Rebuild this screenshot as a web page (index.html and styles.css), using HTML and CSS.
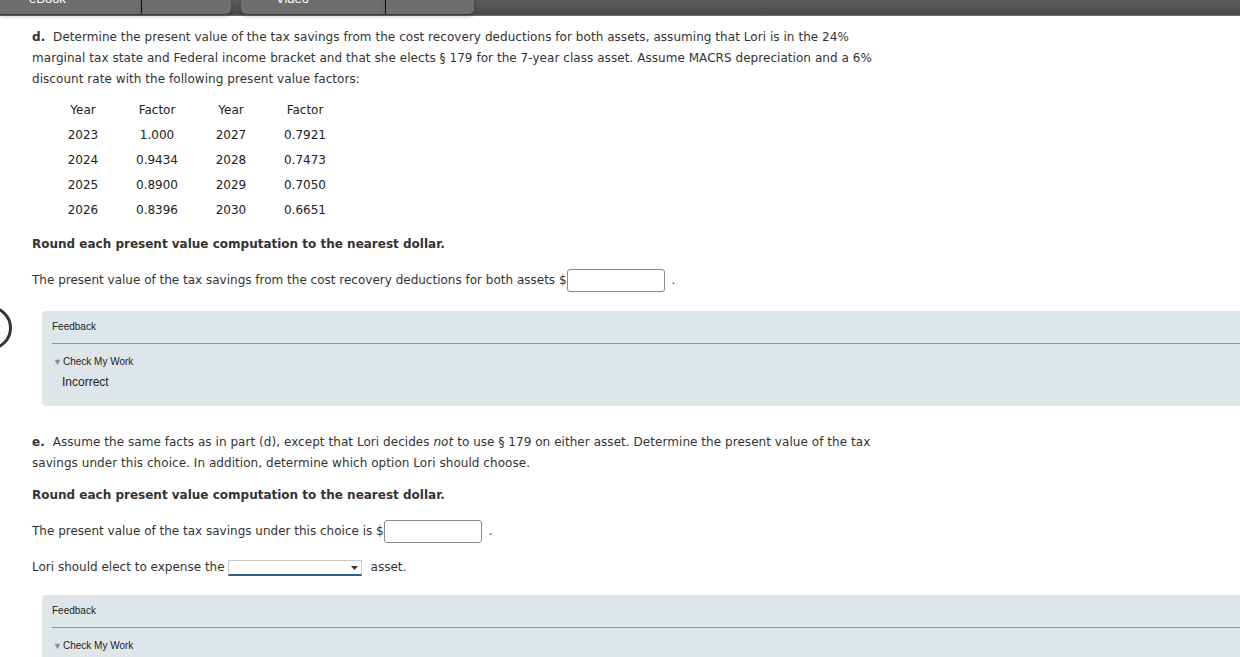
FILE: index.html
```html
<!DOCTYPE html>
<html>
<head>
<meta charset="utf-8">
<link rel="stylesheet" href="styles.css">
</head>
<body>
<div class="topbar">
  <div class="tabgroup tg1">
    <div class="tab t1"><span>eBook</span></div>
    <div class="tab t2"></div>
  </div>
  <div class="tabgroup tg2">
    <div class="tab t3"><span>Video</span></div>
    <div class="tab t4"></div>
  </div>
</div>

<div class="circle"></div>

<div class="content">
  <p class="para"><b>d.</b> Determine the present value of the tax savings from the cost recovery deductions for both assets, assuming that Lori is in the 24% marginal tax state and Federal income bracket and that she elects § 179 for the 7-year class asset. Assume MACRS depreciation and a 6% discount rate with the following present value factors:</p>

  <table class="pv">
    <tr><th>Year</th><th>Factor</th><th>Year</th><th>Factor</th></tr>
    <tr><td>2023</td><td>1.000</td><td>2027</td><td>0.7921</td></tr>
    <tr><td>2024</td><td>0.9434</td><td>2028</td><td>0.7473</td></tr>
    <tr><td>2025</td><td>0.8900</td><td>2029</td><td>0.7050</td></tr>
    <tr><td>2026</td><td>0.8396</td><td>2030</td><td>0.6651</td></tr>
  </table>

  <p class="bold r1">Round each present value computation to the nearest dollar.</p>

  <p class="line a1">The present value of the tax savings from the cost recovery deductions for both assets $<span class="input"></span><span class="dot">.</span></p>

  <div class="feedback fb1">
    <div class="fbtitle">Feedback</div>
    <div class="fbrule"></div>
    <div class="check"><span class="tri">▼</span>Check My Work</div>
    <div class="result">Incorrect</div>
  </div>

  <p class="para e1"><b>e.</b> Assume the same facts as in part (d), except that Lori decides <i>not</i> to use § 179 on either asset. Determine the present value of the tax savings under this choice. In addition, determine which option Lori should choose.</p>

  <p class="bold r2">Round each present value computation to the nearest dollar.</p>

  <p class="line a2">The present value of the tax savings under this choice is $<span class="input"></span><span class="dot">.</span></p>

  <p class="line a3">Lori should elect to expense the <span class="select"><svg class="caret" width="7" height="4" viewBox="0 0 7 4"><path d="M0 0H7L3.5 4Z" fill="#333"/></svg></span><span class="after">asset.</span></p>

  <div class="feedback fb2">
    <div class="fbtitle">Feedback</div>
    <div class="fbrule"></div>
    <div class="check"><span class="tri">▼</span>Check My Work</div>
  </div>
</div>
</body>
</html>
```

FILE: styles.css
```css
html, body {
  margin: 0;
  padding: 0;
  background: #fff;
  overflow: hidden;
}
body {
  width: 1240px;
  height: 657px;
  position: relative;
  font-family: "DejaVu Sans", sans-serif;
  color: #333;
}
.topbar {
  height: 15px;
  background: linear-gradient(#5c5c5c, #4a4a4a);
  border-bottom: 1px solid #6a6a6a;
  display: flex;
  gap: 10px;
}
.tabgroup {
  display: flex;
  height: 14px;
}
.tg1 { width: 231px; }
.tg2 { width: 233px; }
.tab {
  background: #6e6e6e;
  height: 14px;
  position: relative;
  overflow: hidden;
  box-shadow: 0 2px 4px rgba(0,0,0,0.25);
}
.t1 { width: 141px; border-right: 1px solid #111; }
.t2 { width: 89px; border-radius: 0 0 5px 0; }
.t3 { width: 144px; border-right: 1px solid #111; border-radius: 0 0 0 5px; }
.t4 { width: 88px; border-radius: 0 0 5px 0; }
.tab span {
  position: absolute;
  top: -9px;
  left: 29px;
  color: #fff;
  font: 13px "Liberation Sans", Arial, sans-serif;
}
.t3 span { left: 35px; }

.circle {
  position: absolute;
  left: -32px;
  top: 306px;
  width: 38px;
  height: 38px;
  border: 3px solid #333;
  border-radius: 50%;
}

.content {
  padding-left: 32px;
}
.para {
  margin: 0;
  width: 860px;
  font-family: "DejaVu Sans", sans-serif;
  font-size: 12px;
  line-height: 21px;
  letter-spacing: 0.05px;
}
.para:first-child { margin-top: 11px; }
.para b { font-weight: bold; margin-right: 4px; }

.pv {
  border-collapse: collapse;
  margin: 7px 0 0 14px;
  font-family: "DejaVu Sans", sans-serif;
  font-size: 12px;
  color: #222;
}
.pv th, .pv td {
  width: 74px;
  height: 25px;
  padding: 0;
  text-align: center;
  font-weight: normal;
}

.bold {
  margin: 0;
  font-family: "DejaVu Sans", sans-serif;
  font-weight: bold;
  font-size: 12px;
  line-height: 21px;
}
.r1 { margin-top: 12px; }
.line {
  margin: 0;
  font-family: "DejaVu Sans", sans-serif;
  font-size: 12px;
  line-height: 21px;
  display: flex;
  align-items: center;
}
.a1 { margin-top: 14px; }
.input {
  display: inline-block;
  border: 1px solid #8a8a8a;
  border-radius: 3px;
  box-sizing: border-box;
  width: 98px;
  height: 23px;
  background: #fff;
}
.dot { margin-left: 7px; }

.feedback {
  margin-top: 19px;
  margin-left: 10px;
  background: #dfe6e9;
  border-radius: 4px 0 0 4px;
  padding: 9px 0 0 10px;
  font-family: "Liberation Sans", Arial, sans-serif;
  color: #222;
}
.fb1 { height: 86px; }
.fbtitle {
  font-size: 10px;
  line-height: 14px;
}
.fbrule {
  height: 1px;
  background: #8e9599;
  margin-top: 9px;
}
.check {
  font-size: 10px;
  line-height: 14px;
  margin-top: 11px;
  padding-left: 1px;
}
.tri {
  color: #8a8a8a;
  font-size: 9px;
  margin-right: 1px;
}
.result {
  font-size: 12px;
  line-height: 16px;
  margin-top: 5px;
  padding-left: 10px;
}

.e1 { margin-top: 26px; }
.r2 { margin-top: 11px; }
.a2 { margin-top: 14px; }
.a3 { margin-top: 14px; }
.select {
  display: inline-block;
  position: relative;
  width: 134px;
  height: 16px;
  box-sizing: border-box;
  border: 1px solid #c8c8c8;
  border-bottom: 2px solid #2a5f8a;
  margin-left: 3px;
  background: #fff;
}
.caret {
  position: absolute;
  right: 3px;
  top: 5px;
}
.after { margin-left: 9px; }
.fb2 { height: 70px; margin-top: 17px; }
```
